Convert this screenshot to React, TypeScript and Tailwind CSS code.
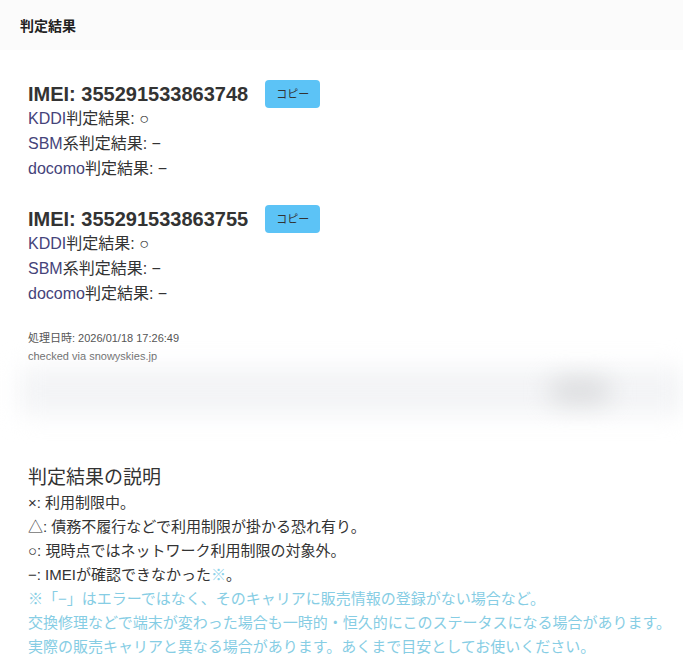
import React from "react";

const font = { fontFamily: '"Liberation Sans", "Noto Sans CJK JP", sans-serif' };

function Block({ imei }: { imei: string }) {
  return (
    <div>
      <div className="flex items-center h-[28px] gap-[17px]">
        <span className="text-[20px] font-bold text-[#333] leading-none">IMEI: {imei}</span>
        <button className="w-[55px] h-[28px] rounded-[4px] bg-[#5cc3f6] text-[11px] text-[#333] flex items-center justify-center">
          コピー
        </button>
      </div>
      <div className="mt-[-2px] text-[16px] leading-[25px] text-[#333]">
        <div><span className="text-[#45437a]">KDDI</span>判定結果: ○</div>
        <div><span className="text-[#45437a]">SBM</span>系判定結果: −</div>
        <div><span className="text-[#45437a]">docomo</span>判定結果: −</div>
      </div>
    </div>
  );
}

export default function App() {
  return (
    <div className="w-[683px] h-[666px] bg-white overflow-hidden" style={font}>
      <div className="h-[50px] bg-[#fbfbfb] flex items-center pl-[20px] pt-[2px]">
        <span className="text-[14px] font-bold text-[#222]">判定結果</span>
      </div>
      <div className="pl-[28px] pt-[30px]">
        <Block imei="355291533863748" />
        <div className="h-[24px]" />
        <Block imei="355291533863755" />
        <div className="mt-[23px] text-[11px] leading-[18px] text-[#555]">
          <div>処理日時: 2026/01/18 17:26:49</div>
          <div>checked via snowyskies.jp</div>
        </div>
      </div>
      <div className="relative h-[48px] ml-[20px] mt-[2px]">
        <div className="absolute inset-0 bg-[#f3f4f6] blur-md" />
        <div className="absolute left-[530px] top-[12px] w-[60px] h-[24px] rounded-full bg-[#dadbdd] blur-md" />
      </div>
      <div className="pl-[28px] pt-[49px]">
        <div className="text-[19px] leading-[28px] text-[#333]">判定結果の説明</div>
        <div className="text-[15px] leading-[24px] text-[#333] mt-[-1px]">
          <div>×: 利用制限中。</div>
          <div>△: 債務不履行などで利用制限が掛かる恐れ有り。</div>
          <div>○: 現時点ではネットワーク利用制限の対象外。</div>
          <div>−: IMEIが確認できなかった<span className="text-[#8fd3ea]">※</span>。</div>
          <div className="text-[#86cde4]">
            <div>※「−」はエラーではなく、そのキャリアに販売情報の登録がない場合など。</div>
            <div>交換修理などで端末が変わった場合も一時的・恒久的にこのステータスになる場合があります。</div>
            <div>実際の販売キャリアと異なる場合があります。あくまで目安としてお使いください。</div>
          </div>
        </div>
      </div>
    </div>
  );
}
